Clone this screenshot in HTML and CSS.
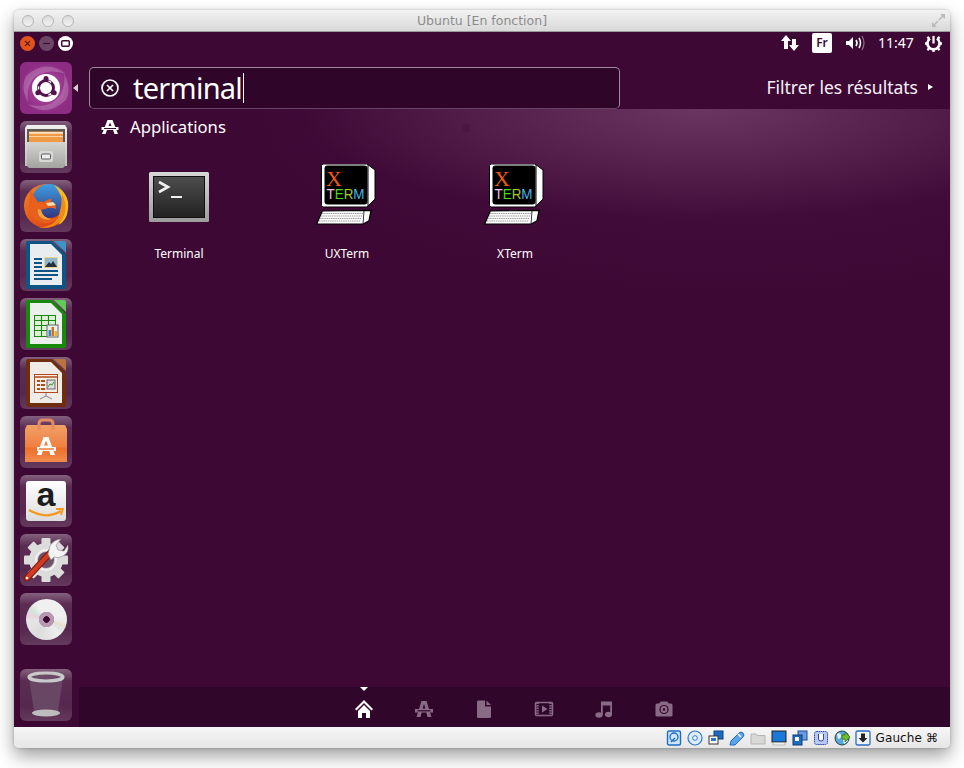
FILE: index.html
```html
<!DOCTYPE html>
<html lang="fr">
<head>
<meta charset="utf-8">
<title>Ubuntu [En fonction]</title>
<link rel="stylesheet" href="styles.css">
</head>
<body>
<div class="window">
  <header class="titlebar">
    <div class="lights"><span class="light"></span><span class="light"></span><span class="light"></span></div>
    <div class="title">Ubuntu [En fonction]</div>
    <svg class="fullscreen" width="15" height="15" viewBox="0 0 15 15"><path d="M9 1h5v5zM1 9v5h5z" fill="#b9b9b9"/><path d="M12 3L8 7M3 12l4-4" stroke="#b9b9b9" stroke-width="1.5"/></svg>
  </header>
  <div class="screen">
    <div class="panel">
      <div class="wincontrols">
        <span class="wc wc-close"><svg width="15" height="15" viewBox="0 0 15 15"><path d="M5 5l5 5M10 5l-5 5" stroke="#5a1d0a" stroke-width="1.1"/></svg></span>
        <span class="wc wc-min"><svg width="15" height="15" viewBox="0 0 15 15"><path d="M4 7.5h7" stroke="#3f0b35" stroke-width="1.2"/></svg></span>
        <span class="wc wc-max"><svg width="15" height="15" viewBox="0 0 15 15"><rect x="3.7" y="4.7" width="7.6" height="5.6" rx="1" fill="none" stroke="#3f0b35" stroke-width="1.5"/></svg></span>
      </div>
      <div class="indicators">
        <svg class="ind-net" width="20" height="20" viewBox="0 0 20 20"><path d="M6 2l5 6H8v8H4V8H1zM14 18l5-6h-3V6h-4v6H9z" fill="#fff"/></svg>
        <span class="ind-lang">Fr</span>
        <svg class="ind-vol" width="20" height="20" viewBox="0 0 20 20"><path d="M1 8h3l4-4v12l-4-4H1z" fill="#fff"/><path d="M11 7q2 3 0 6" fill="none" stroke="#fff" stroke-width="1.6"/><path d="M14 5q3 5 0 10" fill="none" stroke="#fff" stroke-width="1.5"/><path d="M17 3q4 7 0 14" fill="none" stroke="#8f6c8a" stroke-width="1.2"/></svg>
        <span class="ind-clock">11:47</span>
        <svg class="ind-power" width="17" height="17" viewBox="0 0 18 18"><path d="M9 1v8" stroke="#fff" stroke-width="2.4"/><path d="M5.3 3.6A6.4 6.4 0 1 0 12.700 3.600" fill="none" stroke="#fff" stroke-width="2.800"/><path d="M2.500 2l2 2M15.500 2l-2 2M0 9h2.500M15.500 9H18M2.500 16l2-2M15.500 16l-2-2M9 15v3" stroke="#fff" stroke-width="2.400"/></svg>
      </div>
    </div>
    <div class="desktop">
      <nav class="launcher">
        <div class="tile tile-home">
          <svg width="52" height="52" viewBox="0 0 52 52">
            <path d="M6 14Q26-4 46 12 30 6 16 14 6 22 8 40 0 26 6 14z" fill="#fff" opacity=".2"/>
            <path d="M46 38Q26 56 8 42 26 48 38 36 46 26 44 12 52 26 46 38z" fill="#fff" opacity=".2"/>
            <circle cx="26" cy="26" r="14" fill="#fff"/>
            <circle cx="26" cy="26" r="7.500" fill="none" stroke="#54124c" stroke-width="3"/>
            <circle cx="26" cy="26" r="7.500" fill="none" stroke="#fff" stroke-width="1.400" stroke-dasharray="3 12.700" stroke-dashoffset="-6.300"/>
            <circle cx="26" cy="16.500" r="2.500" fill="#54124c"/>
            <circle cx="17.800" cy="30.800" r="2.500" fill="#54124c"/>
            <circle cx="34.200" cy="30.800" r="2.500" fill="#54124c"/>
          </svg>
        </div>
        <div class="tile">
          <svg width="52" height="52" viewBox="0 0 52 52">
            <defs>
              <linearGradient id="cab" x1="0" y1="0" x2="0" y2="1"><stop offset="0" stop-color="#d4d4d1"/><stop offset="1" stop-color="#a3a3a0"/></linearGradient>
              <linearGradient id="captop" x1="0" y1="0" x2="0" y2="1"><stop offset="0" stop-color="#f0f0ee"/><stop offset="1" stop-color="#bdbdba"/></linearGradient>
            </defs>
            <path d="M7 4h38l2 3v38H5V7z" fill="url(#captop)"/>
            <rect x="7" y="8" width="38" height="13" fill="#5c5b56"/>
            <rect x="9" y="10.500" width="34" height="10.500" fill="#f09a46"/>
            <rect x="9" y="11.200" width="34" height="1.400" fill="#fff6e8"/>
            <rect x="9" y="15" width="34" height="1" fill="#f8d4a0"/>
            <path d="M7 21h38v24l-2 2H9l-2-2z" fill="url(#cab)"/>
            <rect x="19" y="30" width="14" height="11" rx="2" fill="#d8d8d6"/>
            <rect x="21.500" y="33" width="9" height="5" rx="1" fill="#eee" stroke="#5a5a58" stroke-width="1"/>
          </svg>
        </div>
        <div class="tile">
          <svg width="52" height="52" viewBox="0 0 52 52">
            <defs>
              <linearGradient id="fx" x1="0" y1="0" x2="1" y2="1"><stop offset="0" stop-color="#f08a20"/><stop offset=".5" stop-color="#e4561a"/><stop offset="1" stop-color="#d83f14"/></linearGradient>
              <linearGradient id="gl" x1="0" y1="0" x2="0" y2="1"><stop offset="0" stop-color="#3f9ee2"/><stop offset="1" stop-color="#33367f"/></linearGradient>
            </defs>
            <circle cx="26" cy="26" r="22" fill="url(#fx)"/>
            <circle cx="29" cy="21" r="17" fill="url(#gl)"/>
            <path d="M34 5q16 8 14 24-1 12-10 16 8-10 5-22-2-10-9-18z" fill="#f8b820"/>
            <path d="M42 14q8 16-2 28-10 8-22 5 16 1 21-12 3-10 3-21z" fill="#f08a18"/>
            <path d="M11 10q-2 6-1 10-3 8 1 15 5 8 15 8 8 0 13-6-6 3-12 1-6-3-6-8l7-2q4-1 8 1 1-4-4-5-2-2 0-5-5 0-8 3-3-1-6 0-4-5-7-12z" fill="#e8601c"/>
            <path d="M26 23l7-1 3 3q-5 1-8 1z" fill="#ffd9a8"/>
            <path d="M21 30q1 7 10 9-6 2-11-2-3-4-2-8z" fill="#f6a23c"/>
          </svg>
        </div>
        <div class="tile">
          <svg width="52" height="52" viewBox="0 0 52 52">
            <path d="M6 4a2 2 0 0 1 2-2h24l14 14v32a2 2 0 0 1-2 2H8a2 2 0 0 1-2-2z" fill="#0e5485"/>
            <path d="M34 2h10a2 2 0 0 1 2 2v10z" fill="#3f94c6"/>
            <path d="M10 5h21l11 11v30H10z" fill="#e9edf0"/>
            <path d="M14 19h8v2h-8zM14 23h8v2h-8zM14 27h8v2h-8zM14 31h24v2H14zM14 35h24v2H14zM14 39h18v2H14z" fill="#0e5485"/>
            <rect x="24" y="18" width="14" height="11" fill="#e6d58a"/>
            <rect x="25" y="19" width="12" height="9" fill="#8fb6cc"/>
            <path d="M25 28l4-5 2 2 2-3 4 6z" fill="#223040"/>
          </svg>
        </div>
        <div class="tile">
          <svg width="52" height="52" viewBox="0 0 52 52">
            <path d="M6 4a2 2 0 0 1 2-2h24l14 14v32a2 2 0 0 1-2 2H8a2 2 0 0 1-2-2z" fill="#178a0e"/>
            <path d="M34 2h10a2 2 0 0 1 2 2v10z" fill="#63c95a"/>
            <path d="M10 5h21l11 11v30H10z" fill="#ecf0ec"/>
            <rect x="14.500" y="17.500" width="21" height="21" fill="#dff0d8" stroke="#178a0e"/>
            <path d="M21.500 18v20M28.500 18v20M15 22.500h20M15 27.500h20M15 32.500h20" stroke="#178a0e" stroke-width="1.100"/>
            <rect x="27" y="27" width="11" height="12" fill="#eee" stroke="#666"/>
            <rect x="28.500" y="32" width="2.500" height="6" fill="#2a8ad0"/>
            <rect x="31.500" y="29" width="2.500" height="9" fill="#dc6a1e"/>
            <rect x="34.500" y="33" width="2.500" height="5" fill="#e8b820"/>
          </svg>
        </div>
        <div class="tile">
          <svg width="52" height="52" viewBox="0 0 52 52">
            <path d="M6 4a2 2 0 0 1 2-2h24l14 14v32a2 2 0 0 1-2 2H8a2 2 0 0 1-2-2z" fill="#6f2c0e"/>
            <path d="M34 2h10a2 2 0 0 1 2 2v10z" fill="#b87440"/>
            <path d="M10 5h21l11 11v30H10z" fill="#efebe6"/>
            <rect x="14.500" y="17.500" width="23" height="18" fill="#f8f0e6" stroke="#b4481c" stroke-width="1"/>
            <path d="M14 20h24" stroke="#b4481c" stroke-width="1.500"/>
            <path d="M17 23h3v2h-3zM21 23h4v2h-4zM17 27h3v2h-3zM21 27h4v2h-4zM17 31h3v2h-3zM21 31h4v2h-4z" fill="#b4481c"/>
            <rect x="27" y="23" width="8" height="9" fill="#ddd" stroke="#666"/>
            <path d="M28 30l2-3 2 1 2-3" stroke="#3a9a30" fill="none"/>
            <path d="M26 36v3M26 39l-6 3M26 39l6 3" stroke="#888" stroke-width="1"/>
          </svg>
        </div>
        <div class="tile">
          <svg width="52" height="52" viewBox="0 0 52 52">
            <defs>
              <linearGradient id="bag" x1="0" y1="0" x2="0" y2="1"><stop offset="0" stop-color="#f0a068"/><stop offset=".6" stop-color="#f08040"/><stop offset=".62" stop-color="#ee6f2a"/><stop offset="1" stop-color="#f08a4c"/></linearGradient>
            </defs>
            <path d="M7 9h38l2 4v33H5V13z" fill="url(#bag)"/>
            <path d="M19 14V8q0-4 4-4h6q4 0 4 4v6" fill="none" stroke="#e68a64" stroke-width="3"/>
            <path d="M23.500 21h5l6.500 18h-4.500l-1.300-4h-6.400l-1.300 4H17z" fill="#fff"/>
            <path d="M26 24.500l-2 5h4z" fill="#f08040"/>
            <rect x="17" y="31" width="19" height="4" fill="#fff"/>
            <rect x="19" y="32.300" width="15" height="1.400" fill="#ee6f2a"/>
          </svg>
        </div>
        <div class="tile">
          <svg width="52" height="52" viewBox="0 0 52 52">
            <defs>
              <linearGradient id="amz" x1="0" y1="0" x2="0" y2="1"><stop offset="0" stop-color="#ffffff"/><stop offset="1" stop-color="#dcdcdc"/></linearGradient>
            </defs>
            <rect x="6" y="6" width="40" height="40" rx="3" fill="url(#amz)"/>
            <text x="26" y="31" class="amz-a">a</text>
            <path d="M9 35q17 10 32 1" fill="none" stroke="#f39a1e" stroke-width="2.200"/>
            <path d="M36 34l7 0-2 6" fill="none" stroke="#f39a1e" stroke-width="1.800"/>
          </svg>
        </div>
        <div class="tile">
          <svg width="52" height="52" viewBox="0 0 52 52">
            <g transform="translate(26 26)">
              <circle r="17" fill="#dcdcdc"/>
              <g fill="#dcdcdc">
                <rect x="-4.500" y="-22" width="9" height="8" rx="1"/>
                <rect x="-4.500" y="14" width="9" height="8" rx="1"/>
                <rect x="-22" y="-4.500" width="8" height="9" rx="1"/>
                <rect x="14" y="-4.500" width="8" height="9" rx="1"/>
                <rect x="-4.500" y="-22" width="9" height="8" rx="1" transform="rotate(45)"/>
                <rect x="-4.500" y="14" width="9" height="8" rx="1" transform="rotate(45)"/>
                <rect x="-22" y="-4.500" width="8" height="9" rx="1" transform="rotate(45)"/>
                <rect x="14" y="-4.500" width="8" height="9" rx="1" transform="rotate(45)"/>
              </g>
              <circle r="11" fill="#c8c8c8"/>
              <circle r="8" fill="#6e5068"/>
              <circle r="10" fill="none" stroke="#f2f2f2" stroke-width="2"/>
            </g>
            <path d="M7 44L31 18" stroke="#7a1a10" stroke-width="6.500" stroke-linecap="round"/>
            <path d="M7 44L31 18" stroke="#d23a22" stroke-width="4.500" stroke-linecap="round"/>
            <circle cx="7" cy="44" r="1.300" fill="#eee"/>
            <path d="M28 20l2-8q3-6 11-7l-5 6 2 5 6 1 4-6q1 8-5 11-5 3-9 1l-3 3z" fill="#f4f4f4" stroke="#888" stroke-width=".6"/>
          </svg>
        </div>
        <div class="tile tile-cd"><span class="cd"></span></div>
        <div class="tile tile-trash">
          <svg width="52" height="52" viewBox="0 0 52 52">
            <path d="M9 9l5 33q12 5 24 0l5-33z" fill="#6a4a66" opacity=".9"/>
            <ellipse cx="26" cy="44" rx="14" ry="3.500" fill="#bdbdbd"/>
            <ellipse cx="26" cy="8" rx="17" ry="4" fill="#6a4a66" stroke="#c9c9c9" stroke-width="3.200"/>
          </svg>
        </div>
      </nav>
      <span class="active-arrow"></span>
      <main class="dash">
        <div class="dash-head">
          <div class="search">
            <svg class="search-x" width="20" height="20" viewBox="0 0 20 20"><circle cx="10" cy="10" r="8" fill="none" stroke="#fff" stroke-width="1.700"/><path d="M7 7l6 6M13 7l-6 6" stroke="#fff" stroke-width="1.700"/></svg>
            <span class="search-text">terminal</span><span class="caret"></span>
          </div>
          <div class="filter">Filtrer les résultats<span class="filter-arrow"></span></div>
        </div>
        <div class="results">
          <span class="artifact"></span>
          <div class="section-head">
            <svg width="18" height="16" viewBox="0 0 18 16"><path d="M6.500 1h5L17 15h-3.600l-1.500-4.500H6.100L4.600 15H1z" fill="#fff"/><path d="M9 3.500L7.500 7h3z" fill="#3f0a35"/><rect x="0.500" y="8" width="17" height="3" fill="#fff"/><rect x="3" y="9" width="12" height="1" fill="#3f0a35"/></svg>
            <span>Applications</span>
          </div>
          <div class="grid">
            <div class="app">
              <svg width="64" height="64" viewBox="0 0 64 64">
                <defs>
                  <linearGradient id="term" x1="0" y1="0" x2="0" y2="1"><stop offset="0" stop-color="#4d4d4d"/><stop offset="1" stop-color="#222"/></linearGradient>
                  <linearGradient id="frame" x1="0" y1="0" x2="0" y2="1"><stop offset="0" stop-color="#d8d8d8"/><stop offset="1" stop-color="#9c9c9c"/></linearGradient>
                </defs>
                <rect x="2" y="8" width="60" height="50" rx="1.500" fill="url(#frame)"/>
                <rect x="6" y="12" width="52" height="42" fill="#111"/>
                <rect x="7" y="13" width="50" height="40" fill="url(#term)"/>
                <path d="M12 18l9 5-9 5" fill="none" stroke="#f0f0f0" stroke-width="2.600"/>
                <rect x="24" y="32" width="11" height="2" fill="#f0f0f0"/>
              </svg>
              <div class="app-name">Terminal</div>
            </div>
            <div class="app">
              <svg width="64" height="64" viewBox="0 0 64 64">
                <path d="M8 0h44l8 6v29l-8 8H8l-1.500-1.500V1.500z" fill="#fff" stroke="#000" stroke-width="1"/>
                <path d="M53 1v41" stroke="#000" stroke-width="1"/>
                <rect x="9.500" y="1.500" width="43" height="39" rx="3" fill="#000"/>
                <text x="19" y="22" class="x-big">X</text>
                <text x="11.500" y="35" class="x-term" textLength="38" lengthAdjust="spacingAndGlyphs"><tspan fill="#f8c0e8">T</tspan><tspan fill="#50d820">E</tspan><tspan fill="#a8c820">R</tspan><tspan fill="#40b8e8">M</tspan></text>
                <path d="M7.300 47L56 46.300 54 56.700 48.300 60H1.700z" fill="#fff" stroke="#000" stroke-width="1.200"/>
                <path d="M49 47l-1 13" stroke="#000" stroke-width=".8"/>
                <path d="M7 49.500h41M6 52h41M5 54.500h41M4 57h41" stroke="#999" stroke-width="1.200" stroke-dasharray="1.500 .7"/>
              </svg>
              <div class="app-name">UXTerm</div>
            </div>
            <div class="app">
              <svg width="64" height="64" viewBox="0 0 64 64">
                <path d="M8 0h44l8 6v29l-8 8H8l-1.500-1.500V1.500z" fill="#fff" stroke="#000" stroke-width="1"/>
                <path d="M53 1v41" stroke="#000" stroke-width="1"/>
                <rect x="9.500" y="1.500" width="43" height="39" rx="3" fill="#000"/>
                <text x="19" y="22" class="x-big">X</text>
                <text x="11.500" y="35" class="x-term" textLength="38" lengthAdjust="spacingAndGlyphs"><tspan fill="#f8c0e8">T</tspan><tspan fill="#50d820">E</tspan><tspan fill="#a8c820">R</tspan><tspan fill="#40b8e8">M</tspan></text>
                <path d="M7.300 47L56 46.300 54 56.700 48.300 60H1.700z" fill="#fff" stroke="#000" stroke-width="1.200"/>
                <path d="M49 47l-1 13" stroke="#000" stroke-width=".8"/>
                <path d="M7 49.500h41M6 52h41M5 54.500h41M4 57h41" stroke="#999" stroke-width="1.200" stroke-dasharray="1.500 .7"/>
              </svg>
              <div class="app-name">XTerm</div>
            </div>
          </div>
        </div>
        <div class="lensbar">
          <div class="lens lens-active">
            <svg width="20" height="20" viewBox="0 0 20 20"><path d="M10 1L1 10l1.500 1.500L10 4l7.500 7.500L19 10z" fill="#fff"/><path d="M4 12l6-6 6 6v7h-4v-5H8v5H4z" fill="#fff"/></svg>
          </div>
          <div class="lens">
            <svg width="20" height="20" viewBox="0 0 20 20"><path d="M7.500 2h5L17.500 18h-4l-1.300-5H7.800l-1.300 5h-4z" fill="#8a6b86"/><path d="M10 5l-1.500 4.500h3z" fill="#30062a"/><rect x="1" y="10" width="18" height="3.500" fill="#8a6b86"/><rect x="3.500" y="11.200" width="13" height="1.200" fill="#30062a"/></svg>
          </div>
          <div class="lens">
            <svg width="20" height="20" viewBox="0 0 20 20"><path d="M3 3a1.500 1.500 0 0 1 1.500-1.500H11v6h6v10a1.500 1.500 0 0 1-1.500 1.500h-11A1.500 1.500 0 0 1 3 17.500zM12.500 1.500l4.500 4.500h-4.500z" fill="#8a6b86"/></svg>
          </div>
          <div class="lens">
            <svg width="20" height="20" viewBox="0 0 20 20"><rect x="1.500" y="3.500" width="17" height="13" rx="1" fill="none" stroke="#8a6b86" stroke-width="1.500"/><path d="M3.500 3.500v13M16.500 3.500v13" stroke="#8a6b86" stroke-width="2.500" stroke-dasharray="1.500 1"/><path d="M8 6.500l5.500 3.500L8 13.500z" fill="#8a6b86"/></svg>
          </div>
          <div class="lens">
            <svg width="20" height="20" viewBox="0 0 20 20"><path d="M7 2.500h11V15h-1.800V6.500H8.800V16H7z" fill="#8a6b86"/><ellipse cx="5" cy="16" rx="3.600" ry="2.800" fill="#8a6b86"/><ellipse cx="14.500" cy="15.500" rx="3.500" ry="2.800" fill="#8a6b86"/></svg>
          </div>
          <div class="lens">
            <svg width="20" height="20" viewBox="0 0 20 20"><path d="M1.500 6q0-1.500 1.500-1.500h2L7 2.500h6l2 2h2q1.500 0 1.500 1.500v10.500q0 1-1.500 1H3q-1.500 0-1.500-1z" fill="#8a6b86"/><circle cx="10" cy="10.500" r="4.600" fill="#30062a"/><circle cx="10" cy="10.500" r="3.400" fill="#8a6b86"/><circle cx="10" cy="10.500" r="1.200" fill="#30062a"/></svg>
          </div>
        </div>
      </main>
    </div>
  </div>
  <footer class="statusbar">
    <svg class="vb" width="16" height="16" viewBox="0 0 16 16"><rect x="1.500" y="1" width="13" height="14" rx="1.500" fill="#cfe6fa" stroke="#1c6cc4" stroke-width="1.400"/><circle cx="8" cy="7" r="4" fill="none" stroke="#1c6cc4" stroke-width="1.300"/><path d="M5 12l4-4" stroke="#1c6cc4" stroke-width="1.300"/></svg>
    <svg class="vb" width="16" height="16" viewBox="0 0 16 16"><circle cx="8" cy="8" r="7" fill="#dcecfb" stroke="#2a78cc" stroke-width="1.200"/><circle cx="8" cy="8" r="2.300" fill="#fff" stroke="#2a78cc"/></svg>
    <svg class="vb" width="16" height="16" viewBox="0 0 16 16"><rect x="6" y="1" width="9" height="8" fill="#1c6cc4" stroke="#0e3f80"/><rect x="1" y="6" width="9" height="8" fill="#fff" stroke="#333"/><rect x="3" y="8" width="5" height="3" fill="#2a78cc"/></svg>
    <svg class="vb" width="16" height="16" viewBox="0 0 16 16"><path d="M1 15l1-4 8-8q2-2 4 0t0 4l-8 8z" fill="#5aa6e8" stroke="#1c6cc4"/><path d="M9 4l3 3" stroke="#fff" stroke-width="1.500"/></svg>
    <svg class="vb" width="16" height="16" viewBox="0 0 16 16"><path d="M1 4h5l1 1.500h8V14H1z" fill="#d8d8d6" stroke="#b4b4b2"/></svg>
    <svg class="vb" width="16" height="16" viewBox="0 0 16 16"><rect x="1" y="1" width="14" height="11" fill="#1c78d8" stroke="#222"/><rect x="2" y="12.500" width="12" height="2.500" fill="#eee" stroke="#999" stroke-width=".6"/></svg>
    <svg class="vb" width="16" height="16" viewBox="0 0 16 16"><rect x="6" y="1" width="9" height="9" fill="#6a9ce0" stroke="#1c4c9c"/><rect x="1" y="5" width="9" height="10" fill="#1c6cc4" stroke="#123a78"/><rect x="3" y="7" width="4" height="4" fill="#fff"/></svg>
    <svg class="vb" width="16" height="16" viewBox="0 0 16 16"><rect x="1.500" y="1.500" width="13" height="13" rx="2" fill="#b8c8f0" stroke="#2a48a8" stroke-dasharray="1.500 .6"/><path d="M5.500 4v5q0 2 2.500 2t2.500-2V4" fill="#fff" stroke="#2a48a8"/></svg>
    <svg class="vb" width="16" height="16" viewBox="0 0 16 16"><circle cx="8" cy="8" r="7" fill="#5aa6d8" stroke="#244"/><path d="M3 4q3-2 4 1T4 9zM9 10l3-2 2 3-4 3z" fill="#eee"/><path d="M8 5h3V2l5 5-5 5V9H8z" fill="#6abf30" stroke="#2c6c10" stroke-width=".7"/></svg>
    <svg class="vb" width="16" height="16" viewBox="0 0 16 16"><rect x="1" y="1" width="14" height="14" rx="1.500" fill="#eef3fa" stroke="#2a6cc0" stroke-width="1.300"/><path d="M6 3.500h4V8h2.500L8 12.500 3.500 8H6z" fill="#222"/></svg>
    <span class="host-key">Gauche ⌘</span>
  </footer>
</div>
</body>
</html>
```
FILE: styles.css
```css
* { box-sizing: border-box; }
html, body { margin: 0; padding: 0; height: 100%; background: #fff; overflow: hidden; }
body { padding: 10px 14px 20px; font-family: "Noto Sans", sans-serif; }

.window {
  width: 936px;
  height: 738px;
  display: flex;
  flex-direction: column;
  border-radius: 5px;
  box-shadow: 0 8px 18px rgba(0,0,0,.38), 0 0 3px rgba(0,0,0,.25);
  overflow: visible;
}

/* Mac title bar */
.titlebar {
  height: 22px;
  flex: none;
  display: flex;
  align-items: center;
  position: relative;
  padding: 0 4px 0 8px;
  border-radius: 5px 5px 0 0;
  background: linear-gradient(#f2f2f2, #d9d9d9);
  border-bottom: 1px solid #9b9b9b;
}
.lights { display: flex; gap: 8px; }
.light { width: 12px; height: 12px; border-radius: 50%; border: 1px solid #b5b5b5; background: linear-gradient(#d9d9d9, #f4f4f4); }
.title { position: absolute; left: 0; right: 0; top: 3px; text-align: center; font: 12.5px/16px "DejaVu Sans", sans-serif; color: #8c8c8c; }
.fullscreen { margin-left: auto; margin-top: 0; }

/* Guest screen */
.screen { flex: 1; min-height: 0; display: flex; flex-direction: column; background: #3e0835; }

.panel { height: 22px; flex: none; display: flex; align-items: center; justify-content: space-between; padding: 0 8px 0 6px; }
.wincontrols { display: flex; gap: 4px; }
.wc { width: 15px; height: 15px; border-radius: 50%; display: block; }
.wc svg { display: block; }
.wc-close { background: #e2521d; }
.wc-min { background: #6d4665; }
.wc-max { background: #fff; }

.indicators { display: flex; align-items: center; color: #fff; }
.ind-net { margin-right: 12px; }
.ind-lang { width: 20px; height: 20px; background: #fff; color: #3e0835; border-radius: 2px; font: 600 12px/20px "Noto Sans", sans-serif; text-align: center; margin-right: 13px; }
.ind-vol { margin-right: 13px; }
.ind-clock { font-size: 14px; line-height: 22px; margin-right: 12px; width: 35px; white-space: nowrap; }

.desktop { flex: 1; min-height: 0; display: flex; position: relative; }

/* Launcher */
.launcher { width: 65px; flex: none; display: flex; flex-direction: column; gap: 7px; padding: 8px 7px 6px 6px; }
.tile {
  width: 52px;
  height: 52px;
  flex: none;
  border-radius: 6px;
  background: linear-gradient(rgba(255,255,255,.36), rgba(255,255,255,.15) 22%, rgba(255,255,255,.13) 70%, rgba(255,255,255,.2));
}
.tile svg { display: block; }
.tile-home { background: radial-gradient(circle at 50% 50%, #b24fa6, #8c2c82 70%); }
.tile-trash { margin-top: auto; }
.tile-cd { display: flex; align-items: center; justify-content: center; }
.cd {
  width: 41px;
  height: 41px;
  border-radius: 50%;
  background:
    radial-gradient(circle, #3e0835 0 3px, #b898b0 3.5px 7.5px, rgba(255,255,255,0) 8px),
    conic-gradient(#f0f0f0 0 70deg, #ececec 95deg, #e4e0cc 112deg, #dfe4e8 122deg, #ededed 140deg, #dcdcdc 210deg, #e6e6e6 265deg, #e8d4dc 285deg, #d4e4d8 300deg, #f0f0f0 325deg);
}
.amz-a { font: 700 34px "Liberation Sans", sans-serif; fill: #1c1c1c; text-anchor: middle; }
.active-arrow { position: absolute; left: 59px; top: 30px; border: 4px solid transparent; border-right: 5px solid #d8cdd6; border-left: 0; }

/* Dash */
.dash { flex: 1; min-width: 0; display: flex; flex-direction: column; }
.dash-head { height: 55px; flex: none; display: flex; align-items: flex-start; padding: 13px 0 0 10px; }
.search {
  width: 531px;
  height: 42px;
  display: flex;
  align-items: center;
  padding-left: 10px;
  background: #2f0529;
  border: 1px solid #a088a0;
  border-bottom-color: #6a4464;
  border-radius: 5px;
}
.search-text { margin-left: 13px; font-size: 29px; letter-spacing: -.75px; line-height: 40px; color: #fff; }
.caret { width: 1px; height: 30px; background: #fff; margin-left: 1px; }
.filter { margin-left: auto; margin-top: 8px; padding-right: 17px; font-size: 17.5px; line-height: 24px; color: #f6f0f6; display: flex; align-items: center; }
.filter-arrow { margin-left: 10px; border: 3.5px solid transparent; border-left: 5px solid #fff; border-right: 0; }

.results {
  flex: 1;
  min-height: 0;
  padding: 8px 0 0 16px;
  position: relative;
  background:
    radial-gradient(ellipse 400px 110px at 620px 0, rgba(130,80,120,.6), rgba(130,80,120,0) 100%),
    radial-gradient(ellipse 500px 190px at 660px 0, rgba(110,50,100,.18), rgba(110,50,100,0) 100%);
}
.artifact { position: absolute; left: 383px; top: 15px; width: 8px; height: 8px; background: #4b1842; }
.section-head { height: 20px; display: flex; align-items: center; padding-left: 6px; color: #fff; font-size: 16.7px; line-height: 20px; gap: 11px; }
.section-head svg { display: block; }
.grid { display: flex; margin-top: 27px; }
.app { width: 168px; display: flex; flex-direction: column; align-items: center; }
.app svg { display: block; }
.app-name { margin-top: 18px; color: #fff; font-size: 12px; line-height: 16px; }
.x-big { font: 400 22px "Liberation Serif", serif; fill: #f05a10; text-anchor: middle; }
.x-term { font: 400 14px "Liberation Sans", sans-serif; }

.lensbar { height: 40px; flex: none; background: #30062a; display: flex; justify-content: center; align-items: center; padding-right: 2px; }
.lens { width: 60px; height: 40px; display: flex; align-items: center; justify-content: center; position: relative; padding-top: 4px; }
.lens-active::before { content: ""; position: absolute; left: 26px; top: 0; border: 4px solid transparent; border-top: 4px solid #fff; border-bottom: 0; }

/* VirtualBox status bar */
.statusbar {
  height: 21px;
  flex: none;
  display: flex;
  align-items: center;
  justify-content: flex-end;
  gap: 5px;
  padding-right: 12px;
  border-radius: 0 0 5px 5px;
  background: linear-gradient(#f6f6f6, #e6e6e6);
}
.vb { display: block; flex: none; }
.host-key { margin-left: 0; padding-top: 1px; font: 12px/16px "DejaVu Sans", sans-serif; letter-spacing: .1px; color: #111; white-space: nowrap; }
```
